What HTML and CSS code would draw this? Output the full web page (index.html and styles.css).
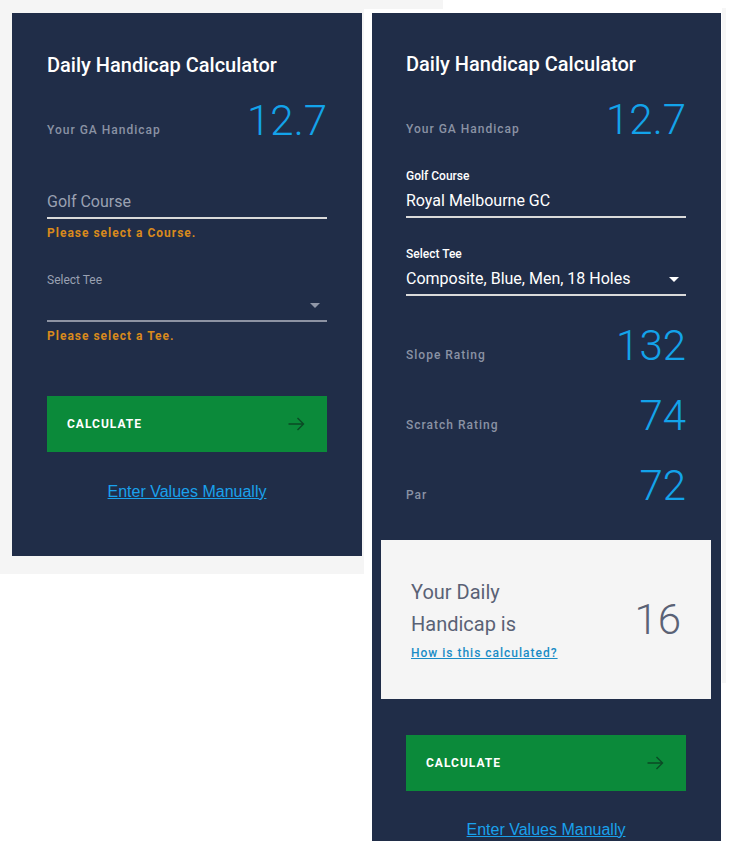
FILE: index.html
```html
<!DOCTYPE html>
<html lang="en">
<head>
<meta charset="utf-8">
<title>Daily Handicap Calculator</title>
<link rel="stylesheet" href="styles.css">
</head>
<body>
<div class="top-strip"></div>
<div class="row">
  <div class="left-col">
    <section class="panel panel--left">
      <h1 class="title">Daily Handicap Calculator</h1>
      <div class="stat">
        <span class="stat-label">Your GA Handicap</span>
        <span class="stat-value">12.7</span>
      </div>
      <div class="field field--first">
        <div class="field-label field-label--empty"></div>
        <div class="field-value field-value--placeholder">Golf Course</div>
      </div>
      <div class="error">Please select a Course.</div>
      <div class="field field--after-error">
        <div class="field-label field-label--muted">Select Tee</div>
        <div class="field-value field-value--select field-value--muted-line">
          <span class="select-text"></span>
          <span class="caret caret--muted"></span>
        </div>
      </div>
      <div class="error">Please select a Tee.</div>
      <button class="calc-btn calc-btn--left" type="button">
        <span class="calc-text">CALCULATE</span>
        <svg class="calc-arrow" width="17" height="14" viewBox="0 0 17 14" aria-hidden="true">
          <path d="M0.5 7 H15.5 M9.5 1 L15.5 7 L9.5 13" fill="none" stroke="#0b4a25" stroke-width="1.4"/>
        </svg>
      </button>
      <a class="manual-link" href="#">Enter Values Manually</a>
    </section>
  </div>
  <div class="right-col">
    <section class="panel panel--right">
      <h1 class="title">Daily Handicap Calculator</h1>
      <div class="stat">
        <span class="stat-label">Your GA Handicap</span>
        <span class="stat-value">12.7</span>
      </div>
      <div class="field field--first">
        <div class="field-label">Golf Course</div>
        <div class="field-value">Royal Melbourne GC</div>
      </div>
      <div class="field field--second">
        <div class="field-label">Select Tee</div>
        <div class="field-value field-value--select">
          <span class="select-text">Composite, Blue, Men, 18 Holes</span>
          <span class="caret"></span>
        </div>
      </div>
      <div class="stat stat--slope">
        <span class="stat-label">Slope Rating</span>
        <span class="stat-value">132</span>
      </div>
      <div class="stat stat--next">
        <span class="stat-label">Scratch Rating</span>
        <span class="stat-value">74</span>
      </div>
      <div class="stat stat--next">
        <span class="stat-label">Par</span>
        <span class="stat-value">72</span>
      </div>
      <div class="result">
        <div class="result-text">
          <div class="result-title">Your Daily<br>Handicap is</div>
          <a class="result-link" href="#">How is this calculated?</a>
        </div>
        <div class="result-value">16</div>
      </div>
      <button class="calc-btn calc-btn--right" type="button">
        <span class="calc-text">CALCULATE</span>
        <svg class="calc-arrow" width="17" height="14" viewBox="0 0 17 14" aria-hidden="true">
          <path d="M0.5 7 H15.5 M9.5 1 L15.5 7 L9.5 13" fill="none" stroke="#0b4a25" stroke-width="1.4"/>
        </svg>
      </button>
      <a class="manual-link" href="#">Enter Values Manually</a>
    </section>
  </div>
  <div class="scroll-strip"></div>
</div>
</body>
</html>
```

FILE: styles.css
```css
* { box-sizing: border-box; }

body {
  margin: 0;
  background: #ffffff;
  font-family: Roboto, "Noto Sans", sans-serif;
}

.top-strip {
  width: 443px;
  height: 9px;
  background: #f5f5f5;
}

.row {
  display: flex;
  align-items: flex-start;
}

.left-col {
  background: #f5f5f5;
  padding: 4px 2px 18px 12px;
}

.right-col {
  margin-left: 8px;
  padding-top: 4px;
}

.scroll-strip {
  width: 4px;
  height: 675px;
  margin-left: 1px;
  margin-top: -1px;
  background: #f6f6f6;
}

.panel {
  background: #202d48;
  display: flex;
  flex-direction: column;
}

.panel--left {
  width: 350px;
  padding: 40px 35px 54px 35px;
}

.panel--right {
  width: 349px;
  padding: 39px 35px 1px 34px;
}

.title {
  margin: 0;
  font-size: 20px;
  line-height: 24px;
  font-weight: 500;
  color: #ffffff;
}

.stat {
  display: flex;
  justify-content: space-between;
  align-items: flex-end;
  margin-top: 20px;
}

.stat--slope { margin-top: 26px; }
.stat--next { margin-top: 22px; }

.stat-label {
  font-size: 12px;
  line-height: 16px;
  font-weight: 500;
  letter-spacing: 1px;
  color: #8a92a4;
  margin-bottom: 7px;
}

.stat-value {
  font-size: 42px;
  line-height: 48px;
  font-weight: 300;
  color: #13a3ea;
}

.field {
  display: flex;
  flex-direction: column;
}

.field--first { margin-top: 24px; }
.field--second { margin-top: 28px; }
.field--after-error { margin-top: 31px; }

.field-label {
  font-size: 12px;
  line-height: 16px;
  font-weight: 500;
  color: #ffffff;
  margin-bottom: 7px;
}

.field-label--empty { height: 16px; }

.field-label--muted {
  color: #9aa1b2;
  font-weight: 400;
}

.field-value {
  font-size: 16px;
  line-height: 20px;
  font-weight: 400;
  color: #ffffff;
  height: 27px;
  padding-bottom: 5px;
  border-bottom: 2px solid #dadada;
}

.field-value--placeholder { color: #9aa1b2; }

.field-value--select {
  display: flex;
  justify-content: space-between;
  align-items: flex-start;
}

.field-value--muted-line { border-bottom-color: #8d93a3; }

.caret {
  width: 0;
  height: 0;
  margin-top: 8px;
  margin-right: 7px;
  border-left: 5px solid transparent;
  border-right: 5px solid transparent;
  border-top: 5px solid #ffffff;
}

.caret--muted { border-top-color: #9097a8; }

.error {
  margin-top: 6px;
  font-size: 12px;
  line-height: 16px;
  font-weight: 700;
  letter-spacing: 1px;
  color: #d98a1c;
}

.calc-btn {
  display: flex;
  justify-content: space-between;
  align-items: center;
  width: 100%;
  height: 56px;
  padding: 0 22px 0 20px;
  border: none;
  background: #0b8a3a;
  cursor: pointer;
  font-family: Roboto, "Noto Sans", sans-serif;
}

.calc-btn--left { margin-top: 52px; }
.calc-btn--right { margin-top: 36px; }

.calc-text {
  font-size: 12px;
  line-height: 16px;
  font-weight: 700;
  letter-spacing: 1px;
  color: #ffffff;
}

.calc-arrow { display: block; }

.manual-link {
  display: block;
  margin-top: 30px;
  text-align: center;
  font-family: "Liberation Sans", Arial, sans-serif;
  font-size: 16px;
  line-height: 20px;
  color: #1aa1ec;
  text-decoration: underline;
}

.panel--right .manual-link { margin-top: 29px; }

.result {
  display: flex;
  justify-content: space-between;
  align-items: center;
  margin: 30px -25px 0 -25px;
  padding: 36px 30px 38px 30px;
  background: #f5f5f5;
}

.result-title {
  font-size: 20px;
  line-height: 32px;
  font-weight: 400;
  color: #5a6275;
}

.result-link {
  display: block;
  margin-top: 5px;
  font-size: 12px;
  line-height: 16px;
  font-weight: 500;
  letter-spacing: 1px;
  color: #1a8cc6;
  text-decoration: underline;
}

.result-value {
  padding-top: 2px;
  font-size: 42px;
  line-height: 48px;
  font-weight: 300;
  color: #5a6275;
}
```
